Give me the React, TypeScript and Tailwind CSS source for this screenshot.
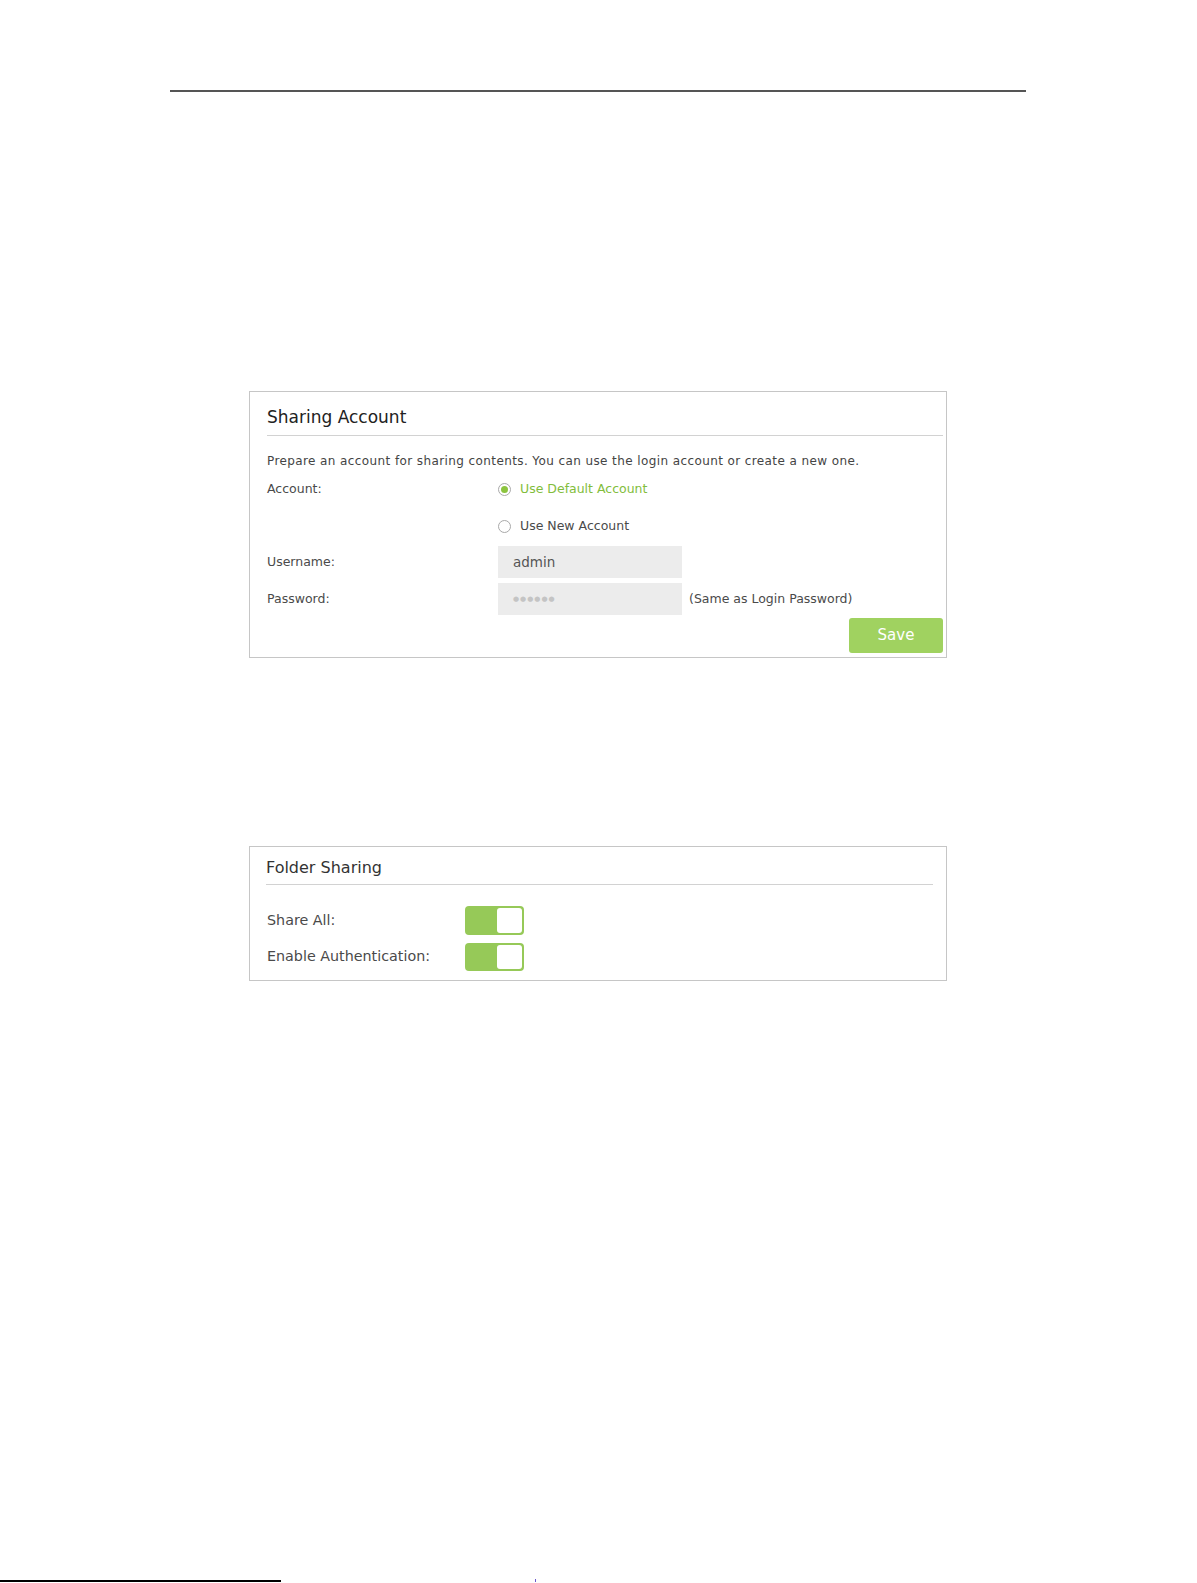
import React from "react";

function Toggle() {
  return (
    <div className="flex w-[59px] h-full rounded-[4px] bg-[#96c958] p-[2px] pl-0">
      <div className="w-[32px]" />
      <div className="flex-1 rounded-[3px] bg-white" />
    </div>
  );
}

function Radio({ checked }: { checked?: boolean }) {
  return (
    <div className="w-[13px] h-[13px] rounded-full border border-[#a9a9a9] bg-white flex items-center justify-center">
      {checked && <div className="w-[7px] h-[7px] rounded-full bg-[#8cc43f]" />}
    </div>
  );
}

export default function App() {
  return (
    <div className="w-[1197px] h-[1583px] bg-white flex flex-col font-['DejaVu_Sans',sans-serif] text-[#4a4a4a]">
      <div className="mt-[90px] ml-[170px] w-[856px] h-[2px] bg-[#555]" />

      {/* Sharing Account */}
      <div className="mt-[299px] ml-[249px] w-[698px] h-[267px] border border-[#c6c6c6] flex flex-col">
        <div className="ml-[17px] mr-[3px] pt-[13px] pb-[6px] border-b border-[#d2d2d2]">
          <div className="text-[17px] leading-[24px] text-[#222]">Sharing Account</div>
        </div>
        <div className="mt-[7px] h-[36px] pl-[17px] flex items-center text-[12px] text-[#444] tracking-[0.4px]">
          Prepare an account for sharing contents. You can use the login account or create a new one.
        </div>
        <div className="h-[21px] flex items-center text-[12.5px]">
          <div className="w-[248px] pl-[17px]">Account:</div>
          <div className="flex items-center gap-[9px]">
            <Radio checked />
            <span className="text-[#82bd3c]">Use Default Account</span>
          </div>
        </div>
        <div className="mt-[12px] h-[28px] flex items-center text-[12.5px]">
          <div className="w-[248px] pl-[17px]" />
          <div className="flex items-center gap-[9px]">
            <Radio />
            <span>Use New Account</span>
          </div>
        </div>
        <div className="mt-[6px] h-[32px] flex items-center text-[12.5px]">
          <div className="w-[248px] pl-[17px]">Username:</div>
          <div className="w-[184px] h-full bg-[#ececec] flex items-center pl-[15px] text-[13.5px] text-[#555]">admin</div>
        </div>
        <div className="mt-[5px] h-[32px] flex items-center text-[12.5px]">
          <div className="w-[248px] pl-[17px]">Password:</div>
          <div className="w-[184px] h-full bg-[#ececec] flex items-center pl-[15px] text-[7px] tracking-[1px] text-[#c4c4c4]">●●●●●●</div>
          <div className="ml-[7px]">(Same as Login Password)</div>
        </div>
        <div className="mt-[3px] h-[35px] flex justify-end pr-[3px]">
          <div className="w-[94px] h-full rounded-[3px] bg-[#a0d260] flex items-center justify-center text-white text-[15px]">Save</div>
        </div>
      </div>

      {/* Folder Sharing */}
      <div className="mt-[188px] ml-[249px] w-[698px] h-[135px] border border-[#c6c6c6] flex flex-col">
        <div className="ml-[16px] mr-[13px] pt-[10px] pb-[5px] border-b border-[#d2d2d2]">
          <div className="text-[16px] leading-[22px] text-[#333]">Folder Sharing</div>
        </div>
        <div className="mt-[21px] h-[29px] flex items-center text-[14.3px]">
          <div className="w-[215px] pl-[17px]">Share All:</div>
          <Toggle />
        </div>
        <div className="mt-[8px] h-[28px] flex items-center text-[14.3px]">
          <div className="w-[215px] pl-[17px]">Enable Authentication:</div>
          <Toggle />
        </div>
      </div>

      <div className="mt-auto mb-[1px] flex items-end">
        <div className="w-[281px] h-[2px] bg-black" />
        <div className="ml-[254px] w-px h-[3px] bg-[#6a5acd]" />
      </div>
    </div>
  );
}
